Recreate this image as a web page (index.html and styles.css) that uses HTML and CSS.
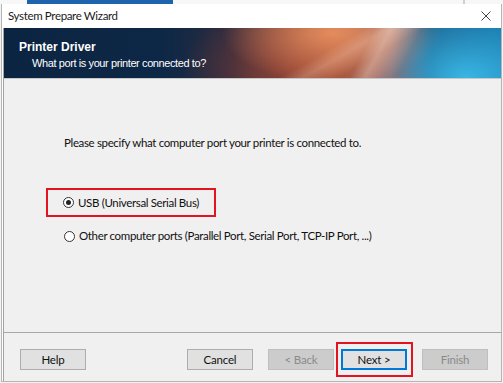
FILE: index.html
```html
<!DOCTYPE html>
<html lang="en">
<head>
    <meta charset="UTF-8">
    <meta name="viewport" content="width=device-width, initial-scale=1.0">
    <title>System Prepare Wizard</title>
    <link rel="stylesheet" href="styles.css">
</head>
<body>
    <!-- Window behind the dialog -->
    <div class="backdrop">
        <div class="logo-strip"></div>
        <div class="back-edge"></div>
    </div>

    <div class="window">
        <!-- Title bar -->
        <div class="titlebar">
            <span class="title">System Prepare Wizard</span>
            <svg class="close" width="10" height="10" viewBox="0 0 10 10">
                <path d="M0.5 0.5 L9.5 9.5 M9.5 0.5 L0.5 9.5" stroke="#444" stroke-width="1" fill="none"/>
            </svg>
        </div>

        <div class="frame">
            <!-- Header banner -->
            <div class="banner">
                <div class="banner-title">Printer Driver</div>
                <div class="banner-sub">What port is your printer connected to?</div>
            </div>

            <!-- Page content -->
            <div class="content">
                <p class="prompt">Please specify what computer port your printer is connected to.</p>

                <div class="highlight usb-box">
                    <label class="radio-row">
                        <span class="radio checked"></span>
                        USB (Universal Serial Bus)
                    </label>
                </div>

                <label class="radio-row other">
                    <span class="radio"></span>
                    Other computer ports (Parallel Port, Serial Port, TCP-IP Port, ...)
                </label>
            </div>

            <!-- Buttons -->
            <div class="footer">
                <button class="btn">Help</button>
                <button class="btn cancel">Cancel</button>
                <button class="btn" disabled>&lt; Back</button>
                <div class="highlight next-box">
                    <button class="btn default">Next &gt;</button>
                </div>
                <button class="btn finish" disabled>Finish</button>
            </div>
        </div>
    </div>
</body>
</html>
```

FILE: styles.css
```css
body {
    margin: 0;
    padding: 0;
    width: 503px;
    height: 383px;
    overflow: hidden;
    background-color: #f3f3f3;
    font-family: Lato, "Noto Sans", sans-serif;
    font-size: 11.5px;
    letter-spacing: -0.35px;
    color: #000;
}

/* strip of the window behind */
.backdrop {
    height: 4px;
    display: flex;
    background-color: #f7f7f7;
}
.logo-strip {
    margin-left: 27px;
    width: 146px;
    background-color: #1f63ad;
}
.back-edge {
    margin-left: 290px;
    width: 2px;
    background-color: #c4d3e3;
}

.window {
    margin-left: 1px;
    width: 501px;
    height: 378px;
    box-sizing: border-box;
    border: 1px solid #b5b5b5;
    border-top: none;
    display: flex;
    flex-direction: column;
    background-color: #fff;
}

.titlebar {
    height: 24px;
    display: flex;
    align-items: center;
    justify-content: space-between;
    padding: 0 10px 0 6px;
    background-color: #fff;
}
.title {
    font-size: 11.5px;
    color: #1a1a1a;
    padding-bottom: 1px;
}
.close {
    margin-bottom: 1px;
}

.frame {
    flex: 1;
    display: flex;
    flex-direction: column;
    margin-left: 1px;
    border-left: 1px solid #a3a3a3;
    background-color: #f0f0f0;
}

.banner {
    height: 51px;
    box-sizing: border-box;
    padding: 12px 0 0 15px;
    color: #fff;
    border-bottom: 1px solid #c8c8c8;
    letter-spacing: 0;
    background:
        linear-gradient(118deg, transparent 71%, rgba(255,235,220,0.35) 74%, rgba(255,255,255,0.15) 77%, transparent 80%),
        linear-gradient(150deg, transparent 62%, rgba(255,220,200,0.25) 66%, transparent 72%),
        radial-gradient(ellipse 90px 60px at 93% 100%, rgba(60,190,235,0.9), transparent),
        radial-gradient(ellipse 110px 50px at 66% 10%, rgba(240,150,100,0.85), transparent),
        radial-gradient(ellipse 120px 70px at 60% 80%, rgba(160,70,50,0.7), transparent),
        linear-gradient(90deg, #0b2442 0%, #0d2846 32%, #2c2a3e 46%, #6a3a38 56%, #a8583a 66%, #8a6a72 78%, #1e6896 86%, #1a7cb0 100%);
}
.banner-title {
    font-family: "Liberation Sans", Arial, sans-serif;
    font-weight: bold;
    font-size: 12px;
    line-height: 14px;
}
.banner-sub {
    font-family: "Liberation Sans", Arial, sans-serif;
    font-size: 11px;
    line-height: 14px;
    margin: 2px 0 0 13px;
    letter-spacing: -0.4px;
}

.content {
    flex: 1;
    padding: 56px 0 0 42px;
    border-bottom: 1px solid #a8a8a8;
}
.prompt {
    margin: 0 0 37px 18px;
    line-height: 16px;
    color: #111;
}

.radio-row {
    display: flex;
    align-items: center;
    gap: 4px;
    line-height: 16px;
    white-space: nowrap;
    color: #111;
}
.radio {
    width: 11px;
    height: 11px;
    box-sizing: border-box;
    border: 1px solid #333;
    border-radius: 50%;
    background-color: #fff;
    position: relative;
}
.radio.checked::after {
    content: "";
    position: absolute;
    left: 2px;
    top: 2px;
    width: 5px;
    height: 5px;
    border-radius: 50%;
    background-color: #222;
}

.highlight {
    border: 2px solid #e3141f;
}
.usb-box {
    width: 170px;
    height: 29px;
    box-sizing: border-box;
    padding-left: 15px;
    display: flex;
    align-items: center;
}
.other {
    margin: 11px 0 0 18px;
}

.footer {
    height: 48px;
    display: flex;
    align-items: flex-start;
    padding: 16px 13px 0 16px;
    box-sizing: border-box;
}
.btn {
    width: 66px;
    height: 21px;
    box-sizing: border-box;
    border: 1px solid #adadad;
    background-color: #e1e1e1;
    font-family: Lato, "Noto Sans", sans-serif;
    font-size: 11.5px;
    letter-spacing: -0.2px;
    color: #111;
    padding: 0;
    margin-right: 14px;
}
.btn.cancel {
    margin-left: auto;
    margin-right: 15px;
}
.btn:disabled {
    background-color: #cccccc;
    border-color: #bfbfbf;
    color: #8a8a8a;
}
.btn.default {
    border: 2px solid #0078d7;
    margin: 0;
}
.next-box {
    margin: -7px 9px 0 -12px;
    padding: 5px 4px 5px 3px;
}
.btn.finish {
    margin-right: 0;
}
```
